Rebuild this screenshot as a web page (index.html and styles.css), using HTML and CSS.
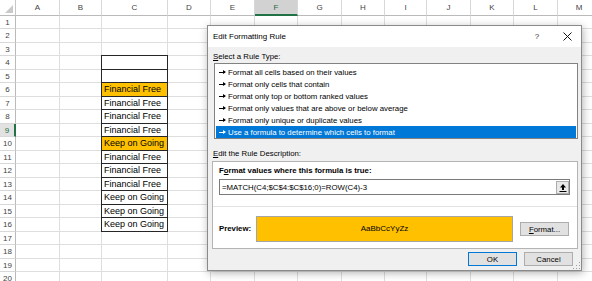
FILE: index.html
```html
<!DOCTYPE html>
<html lang="en">
<head>
    <meta charset="UTF-8">
    <title>Edit Formatting Rule</title>
    <link rel="stylesheet" href="styles.css">
</head>
<body>
<div class="sheet">
    <div id="grid" class="grid"></div>

    <div class="dialog">
        <div class="dialog-title">
            <span class="title-text">Edit Formatting Rule</span>
            <span class="title-help">?</span>
            <span class="title-close">
                <svg width="9" height="9" viewBox="0 0 9 9"><path d="M0.5 0.5L8.5 8.5M8.5 0.5L0.5 8.5" stroke="#111" stroke-width="1" fill="none"/></svg>
            </span>
        </div>
        <div class="dialog-body">
            <div class="label"><u>S</u>elect a Rule Type:</div>
            <ul class="rule-list">
                <li><i class="arrow"></i>Format all cells based on their values</li>
                <li><i class="arrow"></i>Format only cells that contain</li>
                <li><i class="arrow"></i>Format only top or bottom ranked values</li>
                <li><i class="arrow"></i>Format only values that are above or below average</li>
                <li><i class="arrow"></i>Format only unique or duplicate values</li>
                <li class="selected"><i class="arrow"></i>Use a formula to determine which cells to format</li>
            </ul>

            <div class="label label-gap"><u>E</u>dit the Rule Description:</div>
            <div class="desc">
                <div class="desc-top">
                    <div class="bold">F<u>o</u>rmat values where this formula is true:</div>
                    <div class="formula">
                        <span class="formula-text">=MATCH(C4;$C$4:$C$16;0)=ROW(C4)-3</span>
                        <span class="ref-btn">
                            <svg width="8" height="9" viewBox="0 0 8 9"><path d="M4 1L1 4.5H3V7H5V4.5H7Z" fill="#000"/><path d="M0.5 8.5H7.5" stroke="#000" stroke-width="1"/></svg>
                        </span>
                    </div>
                </div>
                <div class="desc-bottom">
                    <span class="bold preview-label">Preview:</span>
                    <div class="preview">AaBbCcYyZz</div>
                    <button class="btn"><u>F</u>ormat...</button>
                </div>
            </div>

            <div class="actions">
                <button class="btn btn-default">OK</button>
                <button class="btn">Cancel</button>
            </div>
            <svg class="grip" width="9" height="9" viewBox="0 0 9 9">
                <rect x="7" y="1" width="1" height="1" fill="#a0a0a0"/>
                <rect x="4" y="4" width="1" height="1" fill="#a0a0a0"/>
                <rect x="7" y="4" width="1" height="1" fill="#a0a0a0"/>
                <rect x="1" y="7" width="1" height="1" fill="#a0a0a0"/>
                <rect x="4" y="7" width="1" height="1" fill="#a0a0a0"/>
                <rect x="7" y="7" width="1" height="1" fill="#a0a0a0"/>
            </svg>
        </div>
    </div>
</div>
<script>
    (function () {
        var grid = document.getElementById('grid');
        var cols = ['A','B','C','D','E','F','G','H','I','J','K','L','M'];
        var ff = 'Financial Free', kg = 'Keep on Going';
        //C4:C16 的数据
        var values = {4:'',5:'',6:ff,7:ff,8:ff,9:ff,10:kg,11:ff,12:ff,13:ff,14:kg,15:kg,16:kg};
        var gold = {6:true,10:true};

        function cell(cls, text) {
            var d = document.createElement('div');
            d.className = cls;
            if (text) d.textContent = text;
            grid.appendChild(d);
        }

        cell('corner');
        for (var i = 0; i < cols.length; i++) {
            cell(cols[i] == 'F' ? 'col-head active' : 'col-head', cols[i]);
        }
        for (var r = 1; r <= 20; r++) {
            cell(r == 9 ? 'row-head active' : 'row-head', String(r));
            for (var c = 0; c < cols.length; c++) {
                var cls = 'cell';
                var text = '';
                if (cols[c] == 'C' && values.hasOwnProperty(r)) {
                    cls += ' boxed';
                    if (r == 4) cls += ' box-top';
                    if (gold[r]) cls += ' gold';
                    text = values[r];
                }
                cell(cls, text);
            }
        }
    })();
</script>
</body>
</html>
```

FILE: styles.css
```css
* {
    box-sizing: border-box;
}
body {
    margin: 0;
    background: #fff;
    font-family: "Liberation Sans", Arial, sans-serif;
}
.sheet {
    position: relative;
    width: 592px;
    height: 281px;
    overflow: hidden;
}

/* excel grid */
.grid {
    display: grid;
    grid-template-columns: 16px 44px 42px 66px 43px 44px 43px 44px 43px 42px 44px 43px 44px 43px;
    grid-template-rows: 15.5px repeat(20, 13.5px);
}
.corner {
    position: relative;
    border-right: 1px solid #c6c6c6;
    border-bottom: 1px solid #bababa;
}
.corner:after {
    content: "";
    position: absolute;
    right: 2px;
    bottom: 2px;
    border-style: solid;
    border-width: 0 0 8px 8px;
    border-color: transparent transparent #c9c9c9 transparent;
}
.col-head {
    border-right: 1px solid #d8d8d8;
    border-bottom: 1px solid #bababa;
    font-size: 8px;
    line-height: 15px;
    text-align: center;
    color: #444;
}
.col-head.active {
    background: #d2d2d2;
    border-bottom: 2px solid #217346;
    color: #1e6b40;
}
.row-head {
    border-right: 1px solid #bababa;
    border-bottom: 1px solid #d8d8d8;
    font-size: 8px;
    line-height: 13px;
    text-align: center;
    color: #444;
}
.row-head.active {
    background: #e2e2e2;
    border-right: 2px solid #217346;
    color: #217346;
}
.cell {
    border-right: 1px solid #dedede;
    border-bottom: 1px solid #dedede;
    font-size: 9px;
    line-height: 13px;
    padding-left: 2px;
    white-space: nowrap;
    overflow: hidden;
    color: #000;
}
.cell.boxed {
    border-right-color: #262626;
    border-bottom-color: #262626;
    box-shadow: -1px 0 0 #262626;
}
.cell.box-top {
    box-shadow: -1px 0 0 #262626, 0 -1px 0 #262626, -1px -1px 0 #262626;
}
.cell.gold {
    background: #ffc000;
}

/* dialog */
.dialog {
    position: absolute;
    left: 207px;
    top: 25px;
    width: 375px;
    height: 246px;
    display: flex;
    flex-direction: column;
    background: #f0f0f0;
    border: 1px solid #8a8a8a;
    box-shadow: 1px 2px 8px rgba(0,0,0,0.3);
    font-size: 7.8px;
    color: #000;
}
.dialog-title {
    display: flex;
    align-items: center;
    height: 21px;
    padding-left: 5px;
    background: #fff;
    font-size: 8px;
}
.title-text {
    flex: 1;
}
.title-help {
    width: 8px;
    margin-right: 22px;
    text-align: center;
    color: #333;
}
.title-close {
    display: flex;
    margin-right: 9px;
}
.dialog-body {
    position: relative;
    flex: 1;
    display: flex;
    flex-direction: column;
    padding: 5px 3px 0 4px;
}
.label {
    line-height: 10px;
    padding-left: 1px;
}
.label-gap {
    margin-top: 10px;
}
.rule-list {
    list-style: none;
    margin: 1px 0 0 2px;
    padding: 2px 1px;
    height: 76px;
    background: #fff;
    border: 1px solid #828282;
}
.rule-list li {
    display: flex;
    align-items: center;
    height: 12px;
    padding-left: 3px;
    white-space: nowrap;
}
.rule-list li.selected {
    background: #0078d7;
    color: #fff;
}
.arrow {
    position: relative;
    width: 6px;
    height: 1px;
    margin-right: 3px;
    background: #000;
}
.arrow:after {
    content: "";
    position: absolute;
    right: -1px;
    top: -2px;
    border-style: solid;
    border-width: 2.5px 0 2.5px 3px;
    border-color: transparent transparent transparent #000;
}
.selected .arrow {
    background: #fff;
}
.selected .arrow:after {
    border-left-color: #fff;
}
.desc {
    margin-top: 2px;
    height: 88px;
    background: #fff;
    border: 1px solid #b4b4b4;
}
.desc-top {
    padding: 4px 7px 11px 6px;
    border-bottom: 1px solid #e3e3e3;
}
.bold {
    font-weight: bold;
    line-height: 10px;
}
.formula {
    display: flex;
    align-items: center;
    margin-top: 3px;
    height: 16px;
    border: 1px solid #7a7a7a;
}
.formula-text {
    flex: 1;
    padding-left: 2px;
}
.ref-btn {
    display: flex;
    align-items: center;
    justify-content: center;
    width: 13px;
    height: 13px;
    margin-right: 0;
    background: #e8e8e8;
    border: 1px solid #adadad;
}
.desc-bottom {
    display: flex;
    align-items: center;
    padding: 9px 0 0 6px;
}
.preview-label {
    width: 37px;
}
.preview {
    width: 257px;
    height: 26px;
    line-height: 24px;
    text-align: center;
    background: #ffc000;
    border: 1px solid #a5a5a5;
    font-size: 8px;
}
.btn {
    width: 49px;
    height: 14px;
    padding: 0;
    background: #e1e1e1;
    border: 1px solid #adadad;
    font-family: inherit;
    font-size: 7.8px;
    color: #000;
}
.desc-bottom .btn {
    margin-left: 7px;
}
.btn-default {
    border-color: #0078d7;
}
.actions {
    display: flex;
    justify-content: flex-end;
    gap: 7px;
    margin-top: 3px;
    padding-right: 5px;
}
.grip {
    position: absolute;
    right: 0;
    bottom: 0;
}
```
